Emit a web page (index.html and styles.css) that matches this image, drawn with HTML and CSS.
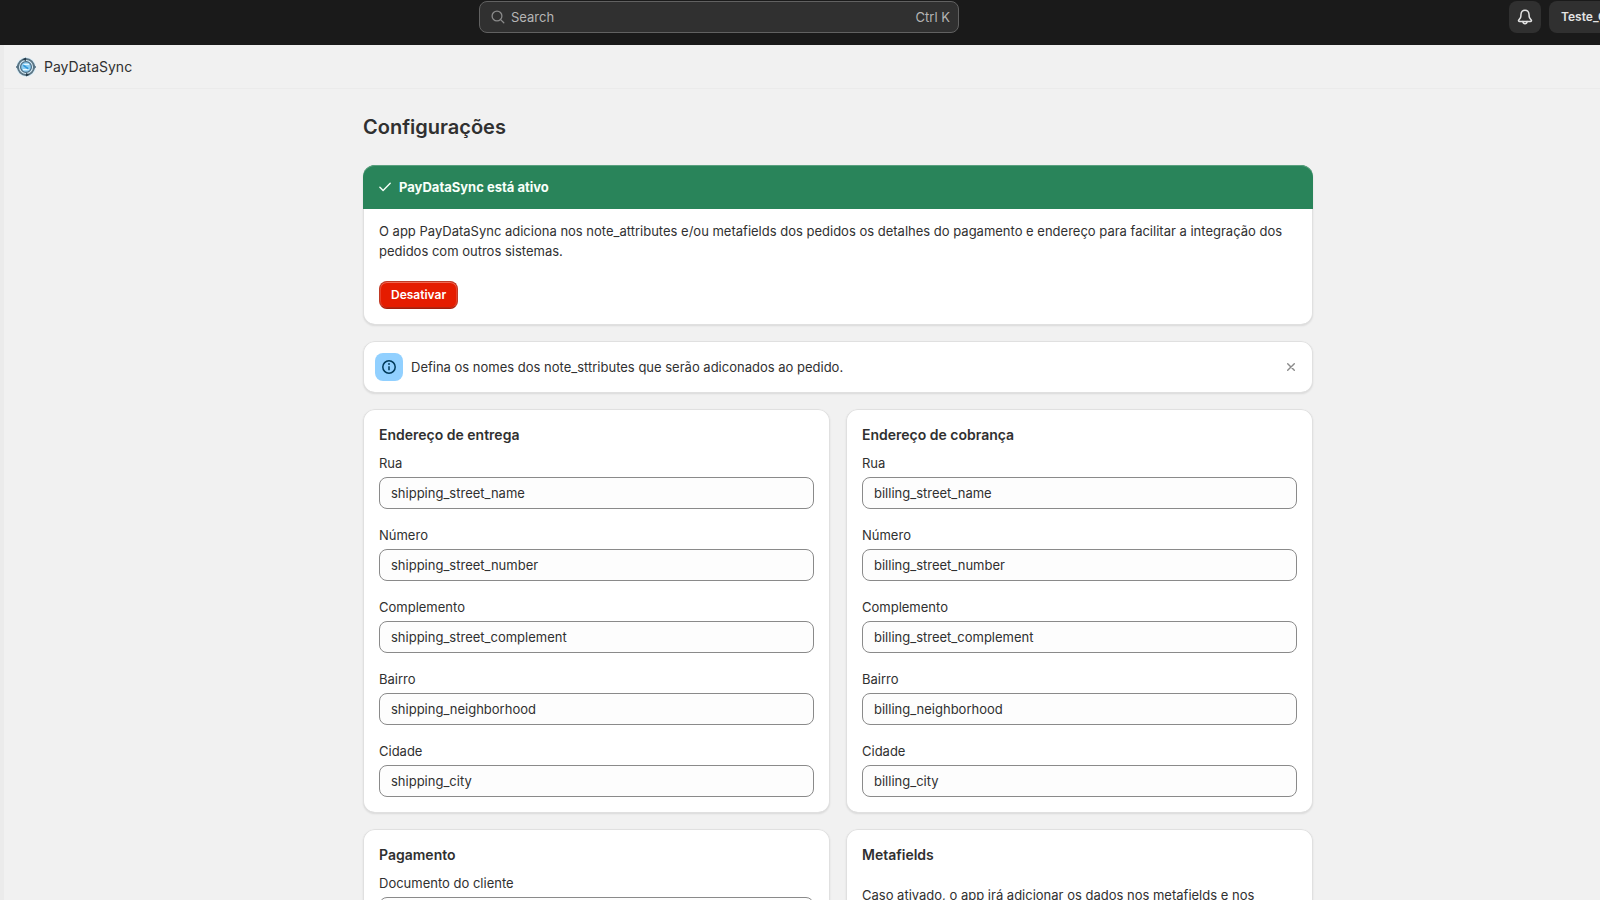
FILE: index.html
```html
<!DOCTYPE html>
<html lang="pt-BR">
<head>
<meta charset="utf-8">
<title>PayDataSync</title>
<link rel="stylesheet" href="styles.css">
</head>
<body>
<header class="topbar">
  <button class="search" type="button">
    <svg width="14" height="14" viewBox="0 0 14 14" fill="none" stroke="#8a8a8a" stroke-width="1.3" stroke-linecap="round"><circle cx="6" cy="6" r="4.9"/><path d="M9.6 9.6l3.2 3.2"/></svg>
    <span class="search-text">Search</span>
    <kbd class="shortcut">Ctrl K</kbd>
  </button>
  <div class="top-actions">
    <button class="bell" type="button" aria-label="Notifications">
      <svg width="16" height="16" viewBox="0 0 16 16" fill="none" stroke="#e3e3e3" stroke-width="1.5" stroke-linejoin="round" stroke-linecap="round"><path d="M8 1.3c-2.3 0-3.8 1.7-4 4L3.8 7.6c-.1.8-.4 1.400-.9 2L1.800 10.900c-.6.8-.2 1.500.7 1.500h11c.9 0 1.300-.7.7-1.500L13.100 9.600c-.5-.6-.8-1.200-.9-2L12 5.300c-.2-2.300-1.700-4-4-4z"/><path d="M5.900 12.600c.2 1.400 1 2.100 2.100 2.100s1.900-.7 2.100-2.100"/></svg>
    </button>
    <button class="store" type="button">Teste_C</button>
  </div>
</header>
<div class="frame">
  <div class="app-header">
    <svg width="20" height="20" viewBox="0 0 20 20" fill="none"><circle cx="10" cy="10" r="9.800" fill="#d9edf8"/><circle cx="10" cy="10" r="8" stroke="#5b7584" stroke-width="1.900"/><path d="M6.500 2.200L10 .6v3.400zM13.500 17.800L10 19.400V16z" fill="#263c4b"/><path d="M1.500 8.600L.5 10l1 1.400M18.500 8.600l1 1.400-1 1.400" stroke="#38546a" stroke-width="1"/><circle cx="10" cy="10" r="5.400" fill="#8ccdf2" stroke="#4a6a80" stroke-width="1.200"/><path d="M13 7.300H9c-1.800 0-1.800 1.800 0 2.200l2 .8c1.900.5 1.900 2.300 0 2.300H7" stroke="#e8f8ff" stroke-width="1.200"/><path d="M7.200 8.200l5.300 3.600" stroke="#2f97db" stroke-width="1.700"/></svg>
    <span>PayDataSync</span>
  </div>
  <main class="page">
    <h1 class="title">Configurações</h1>
    <div class="stack">
      <section class="card status">
        <h2 class="status-head">
          <svg width="12" height="10" viewBox="0 0 12 10" fill="none" stroke="#f8fff9" stroke-width="1.400" stroke-linecap="round" stroke-linejoin="round"><path d="M.9 5.200l3.200 3.200L11.200 1.300"/></svg>
          PayDataSync está ativo
        </h2>
        <div class="status-body">
          <p class="text">O app PayDataSync adiciona nos note_attributes e/ou metafields dos pedidos os detalhes do pagamento e endereço para facilitar a integração dos pedidos com outros sistemas.</p>
          <button class="danger" type="button">Desativar</button>
        </div>
      </section>
      <section class="card banner">
        <span class="info"><svg width="14" height="14" viewBox="0 0 14 14" fill="none" stroke="#003a5a" stroke-width="1.500"><circle cx="7" cy="7" r="6.200"/><path d="M7 6.300V10.200"/><circle cx="7" cy="4" r=".9" fill="#003a5a" stroke="none"/></svg></span>
        <p class="text banner-text">Defina os nomes dos note_sttributes que serão adiconados ao pedido.</p>
        <button class="close" type="button" aria-label="Fechar"><svg width="10" height="10" viewBox="0 0 10 10" fill="none" stroke="#8a8a8a" stroke-width="1.400" stroke-linecap="round"><path d="M1.700 1.700l6.600 6.600M8.300 1.700L1.700 8.300"/></svg></button>
      </section>
      <div class="grid">
        <section class="card form">
          <h2 class="heading">Endereço de entrega</h2>
          <div class="fields">
            <div class="field"><label for="s1">Rua</label><input id="s1" type="text" value="shipping_street_name"></div>
            <div class="field"><label for="s2">Número</label><input id="s2" type="text" value="shipping_street_number"></div>
            <div class="field"><label for="s3">Complemento</label><input id="s3" type="text" value="shipping_street_complement"></div>
            <div class="field"><label for="s4">Bairro</label><input id="s4" type="text" value="shipping_neighborhood"></div>
            <div class="field"><label for="s5">Cidade</label><input id="s5" type="text" value="shipping_city"></div>
          </div>
        </section>
        <section class="card form">
          <h2 class="heading">Endereço de cobrança</h2>
          <div class="fields">
            <div class="field"><label for="b1">Rua</label><input id="b1" type="text" value="billing_street_name"></div>
            <div class="field"><label for="b2">Número</label><input id="b2" type="text" value="billing_street_number"></div>
            <div class="field"><label for="b3">Complemento</label><input id="b3" type="text" value="billing_street_complement"></div>
            <div class="field"><label for="b4">Bairro</label><input id="b4" type="text" value="billing_neighborhood"></div>
            <div class="field"><label for="b5">Cidade</label><input id="b5" type="text" value="billing_city"></div>
          </div>
        </section>
        <section class="card form">
          <h2 class="heading">Pagamento</h2>
          <div class="fields">
            <div class="field"><label for="p1">Documento do cliente</label><input id="p1" type="text"></div>
          </div>
        </section>
        <section class="card form meta">
          <h2 class="heading">Metafields</h2>
          <p class="text">Caso ativado, o app irá adicionar os dados nos metafields e nos</p>
        </section>
      </div>
    </div>
  </main>
</div>
</body>
</html>
```
FILE: styles.css
```css
* { box-sizing: border-box; }

body {
  margin: 0;
  height: 100vh;
  overflow: hidden;
  background: #f1f1f1;
  color: #303030;
  font: 400 13px/20px Inter, sans-serif;
}

h1, h2, p { margin: 0; }

button, input { font: inherit; color: inherit; }

svg { display: block; flex: none; }

.topbar {
  display: grid;
  grid-template-columns: 479fr 480fr 641fr;
  align-items: start;
  height: 45px;
  padding-top: 1px;
  background: #1a1a1a;
}

.search {
  grid-column: 2;
  display: flex;
  align-items: center;
  gap: 6px;
  height: 32px;
  padding: 0 8px 0 11px;
  border: 1px solid #616161;
  border-radius: 8px;
  background: #303030;
  color: #b5b5b5;
}

.search-text { flex: 1; text-align: left; }

.shortcut { font: inherit; }

.top-actions {
  display: flex;
  justify-content: flex-end;
  gap: 8px;
  overflow: hidden;
}

.bell, .store {
  flex: none;
  height: 32px;
  border: 0;
  border-radius: 8px;
  background: #303030;
}

.bell {
  display: grid;
  place-items: center;
  width: 32px;
  padding: 0;
}

.store {
  width: 51px;
  padding: 0 0 0 12px;
  border-radius: 8px 0 0 8px;
  overflow: hidden;
  text-align: left;
  white-space: nowrap;
  color: #e3e3e3;
  font-size: 12px;
  font-weight: 600;
}

.frame {
  min-height: 100vh;
  border-left: 4px solid #ebebeb;
}

.app-header {
  display: flex;
  align-items: center;
  gap: 8px;
  height: 44px;
  padding: 0 12px;
  border-bottom: 1px solid #ebebeb;
  font-size: 14px;
}

.page {
  max-width: 1022px;
  margin: 0 auto;
  padding: 26px 0 0 72px;
}

.title {
  margin-bottom: 26px;
  font-size: 20px;
  line-height: 24px;
  font-weight: 600;
}

.stack {
  display: flex;
  flex-direction: column;
  gap: 16px;
}

.card {
  border-radius: 12px;
  background: #fff;
  box-shadow: inset 0 0 0 1px #e0e0e0, inset 0 -1px 0 #cccccc, 0 1px 2px rgba(0, 0, 0, 0.1);
}

.status-head {
  display: flex;
  align-items: center;
  gap: 8px;
  padding: 12px 16px;
  border-radius: 12px 12px 0 0;
  background: #29845a;
  box-shadow: inset 0 1px 0 #5aa07f;
  color: #f8fff9;
  font-size: 13px;
  font-weight: 700;
}

.status-body {
  display: flex;
  flex-direction: column;
  align-items: flex-start;
  gap: 20px;
  padding: 12px 16px 16px;
}

.danger {
  height: 28px;
  padding: 0 11px;
  border: 1px solid #c03a25;
  border-bottom-color: #a51c0a;
  border-radius: 8px;
  background: #e51c00;
  box-shadow: inset 0 1px 0 #ef6a55, inset 1px 0 0 #e8402a, inset -1px 0 0 #e8402a, inset 0 -1px 0 #b4250f;
  color: #fff;
  font-size: 12px;
  font-weight: 600;
}

.banner {
  display: flex;
  align-items: center;
  gap: 8px;
  padding: 12px;
}

.banner-text { flex: 1; }

.info {
  display: grid;
  place-items: center;
  width: 28px;
  height: 28px;
  border-radius: 8px;
  background: #91d0ff;
}

.close {
  display: grid;
  place-items: center;
  width: 20px;
  height: 20px;
  padding: 0;
  border: 0;
  background: transparent;
}

.grid {
  display: grid;
  grid-template-columns: 1fr 1fr;
  gap: 16px;
}

.form {
  display: flex;
  flex-direction: column;
  gap: 8px;
  padding: 16px;
}

.meta { gap: 20px; }

.heading {
  font-size: 14px;
  line-height: 20px;
  font-weight: 600;
}

.fields {
  display: flex;
  flex-direction: column;
  gap: 16px;
}

.field {
  display: flex;
  flex-direction: column;
  gap: 4px;
}

.field input {
  width: 100%;
  height: 32px;
  padding: 0 11px;
  border: 1px solid #8a8a8a;
  border-radius: 8px;
  background: #fdfdfd;
}
```
